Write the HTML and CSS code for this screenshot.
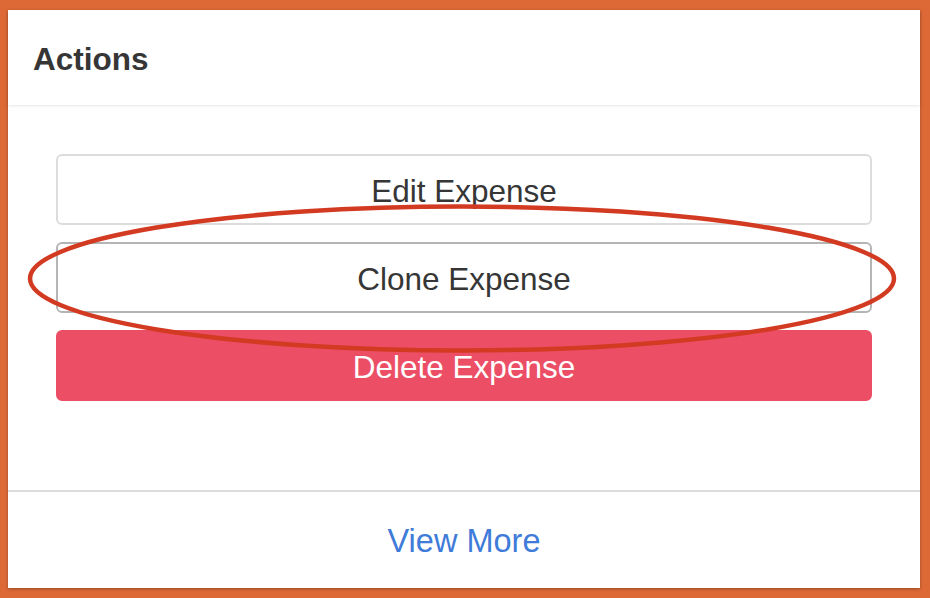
FILE: index.html
```html
<!DOCTYPE html>
<html lang="en">
<head>
<meta charset="utf-8">
<title>Actions</title>
<link rel="stylesheet" href="styles.css">
</head>
<body>
<div class="card">
  <header class="card-header">
    <h2 class="card-title">Actions</h2>
  </header>
  <section class="card-body">
    <button class="btn btn-default">Edit Expense</button>
    <button class="btn btn-default btn-hover">Clone Expense</button>
    <button class="btn btn-danger">Delete Expense</button>
  </section>
  <footer class="card-footer">
    <a class="footer-link" href="#">View More</a>
  </footer>
  <svg class="annotation" width="912" height="578" viewBox="0 0 912 578" aria-hidden="true">
    <ellipse cx="454" cy="268.5" rx="432" ry="72" fill="none" stroke="#d33a22" stroke-width="4.5"/>
  </svg>
</div>
</body>
</html>
```

FILE: styles.css
```css
html, body {
  margin: 0;
  padding: 0;
}
body {
  background: #dd6937;
  width: 930px;
  height: 598px;
  overflow: hidden;
  font-family: "Liberation Sans", Arial, sans-serif;
  color: #363636;
}
.card {
  position: relative;
  margin: 10px 0 0 8px;
  width: 912px;
  height: 578px;
  background: #fff;
  box-shadow: 0 1px 3px rgba(0, 0, 0, 0.3);
  display: flex;
  flex-direction: column;
}
.card-header {
  height: 95px;
  display: flex;
  align-items: center;
  padding: 4px 0 0 25px;
  box-sizing: border-box;
  box-shadow: 0 1px 3px rgba(0, 0, 0, 0.1);
}
.card-title {
  margin: 0;
  font-size: 31.5px;
  font-weight: bold;
  color: #363636;
}
.card-body {
  flex: 1;
  padding: 49px 48px 0;
  display: flex;
  flex-direction: column;
  gap: 17px;
  border-bottom: 2px solid #dcdcdc;
}
.btn {
  height: 71px;
  border-radius: 6px;
  font-family: inherit;
  font-size: 31.5px;
  background: #fff;
  color: #363636;
  border: 2px solid #dcdcdc;
  padding: 3px 0 0;
}
.btn-hover {
  border-color: #b5b5b5;
}
.btn-danger {
  background: #ec4e66;
  border-color: #ec4e66;
  color: #fff;
}
.card-footer {
  height: 96px;
  display: flex;
  align-items: center;
  justify-content: center;
  padding-top: 2px;
  box-sizing: border-box;
}
.footer-link {
  font-size: 32.5px;
  color: #3f7bd8;
  text-decoration: none;
}
.annotation {
  position: absolute;
  left: 0;
  top: 0;
  pointer-events: none;
}
```
